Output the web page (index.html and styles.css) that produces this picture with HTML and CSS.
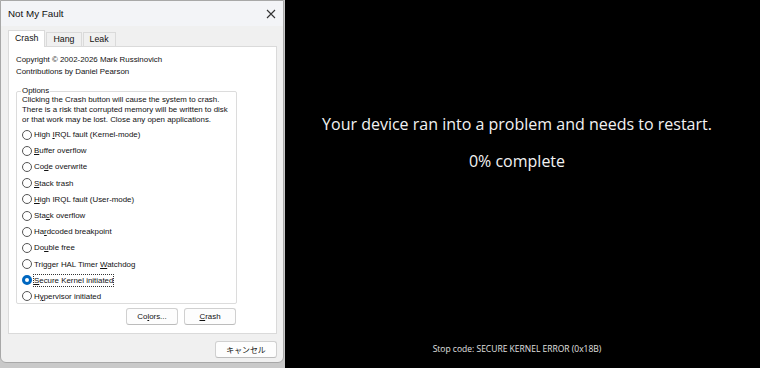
FILE: index.html
```html
<!doctype html>
<html lang="en">
  <head>
    <meta charset="UTF-8" />
    <meta name="viewport" content="width=device-width, initial-scale=1.0" />
    <title>Not My Fault</title>
    <link rel="stylesheet" href="styles.css">
  </head>
  <body>
    <div class="page">
      <div class="side">
        <div class="dialog">
          <div class="titlebar">
            <span>Not My Fault</span>
            <svg class="close" width="10" height="10" viewBox="0 0 10 10">
              <path d="M1 1 L9 9 M9 1 L1 9" stroke="#333" stroke-width="1.1" fill="none" />
            </svg>
          </div>

          <div class="content">
            <div class="tabs">
              <div class="tab active">Crash</div>
              <div class="tab">Hang</div>
              <div class="tab">Leak</div>
            </div>

            <div class="panel">
              <div class="copy">
                Copyright © 2002-2026 Mark Russinovich<br />
                Contributions by Daniel Pearson
              </div>

              <fieldset class="options">
                <legend>Options</legend>
                <p class="warn">
                  Clicking the Crash button will cause the system to crash.<br />
                  There is a risk that corrupted memory will be written to disk<br />
                  or that work may be lost. Close any open applications.
                </p>
                <ul class="radios">
                  <li><span class="radio"></span><span>High <u>I</u>RQL fault (Kernel-mode)</span></li>
                  <li><span class="radio"></span><span><u>B</u>uffer overflow</span></li>
                  <li><span class="radio"></span><span>Co<u>d</u>e overwrite</span></li>
                  <li><span class="radio"></span><span><u>S</u>tack trash</span></li>
                  <li><span class="radio"></span><span><u>H</u>igh IRQL fault (User-mode)</span></li>
                  <li><span class="radio"></span><span>Sta<u>c</u>k overflow</span></li>
                  <li><span class="radio"></span><span>Ha<u>r</u>dcoded breakpoint</span></li>
                  <li><span class="radio"></span><span>Do<u>u</u>ble free</span></li>
                  <li><span class="radio"></span><span>Trigger HAL Timer <u>W</u>atchdog</span></li>
                  <li class="checked"><span class="radio"></span><span class="focus"><u>S</u>ecure Kernel initiated</span></li>
                  <li><span class="radio"></span><span>H<u>y</u>pervisor initiated</span></li>
                </ul>
              </fieldset>

              <div class="actions">
                <button>Co<u>l</u>ors...</button>
                <button><u>C</u>rash</button>
              </div>
            </div>
          </div>

          <div class="footer">
            <button class="cancel">キャンセル</button>
          </div>
        </div>
      </div>

      <div class="screen">
        <div class="message">Your device ran into a problem and needs to restart.</div>
        <div class="progress">0% complete</div>
        <div class="stop">Stop code: SECURE KERNEL ERROR (0x18B)</div>
      </div>
    </div>
  </body>
</html>
```

FILE: styles.css
```css
* {
  box-sizing: border-box;
}
body {
  margin: 0;
  background: #000;
  font-family: "Open Sans", "Noto Sans", "Noto Sans CJK JP", sans-serif;
}
.page {
  display: flex;
  width: 760px;
  height: 368px;
  overflow: hidden;
}
.side {
  width: 285px;
  flex: none;
  background: #c9c9c9;
}
.dialog {
  width: 284px;
  height: 363px;
  background: #f0f0f0;
  border: 1px solid #a8a8a8;
  border-radius: 0 0 6px 6px;
  display: flex;
  flex-direction: column;
  color: #111;
  font-family: "Liberation Sans", "Noto Sans CJK JP", sans-serif;
  font-size: 7.9px;
}
.titlebar {
  height: 25px;
  display: flex;
  align-items: center;
  justify-content: space-between;
  padding: 0 7px 0 7px;
  background: #f3f4f7;
  font-size: 9.8px;
}
.content {
  padding: 4px 6px 0 7px;
}
.tabs {
  display: flex;
  height: 16px;
  align-items: flex-end;
}
.tab {
  height: 14px;
  padding: 0 6px;
  border: 1px solid #dadada;
  border-bottom: none;
  margin-right: 1px;
  background: #f0f0f0;
  line-height: 13px;
  font-size: 8.8px;
}
.tab.active {
  height: 17px;
  background: #fff;
  margin-bottom: -1px;
  position: relative;
  line-height: 14px;
}
.panel {
  height: 288px;
  background: #fff;
  border: 1px solid #dadada;
  padding: 7px 7px 0 7px;
}
.copy {
  line-height: 12px;
}
.options {
  margin: 8px 0 0 0;
  padding: 0 5px 0 5px;
  width: 221px;
  height: 218px;
  border: 1px solid #dcdcdc;
  border-radius: 2px;
}
.options legend {
  padding: 0 1px;
  margin-left: -1px;
  line-height: 10px;
}
.warn {
  margin: -1px 0 0 0;
  line-height: 10px;
  white-space: nowrap;
}
.radios {
  list-style: none;
  margin: 1.5px 0 0 0;
  padding: 0;
}
.radios li {
  height: 16.2px;
  display: flex;
  align-items: center;
  gap: 2px;
  white-space: nowrap;
}
.radio {
  width: 10px;
  height: 10px;
  border: 1px solid #555;
  border-radius: 50%;
  flex: none;
  background: #fff;
}
.checked .radio {
  border: 3px solid #0067c0;
  background: #fff;
}
.focus {
  outline: 1px dotted #333;
  outline-offset: 0;
  line-height: 11px;
}
.actions {
  display: flex;
  justify-content: flex-end;
  gap: 6px;
  width: 220px;
  margin-top: 4px;
}
button {
  font-family: inherit;
  font-size: 7.9px;
  color: #111;
  background: #fdfdfd;
  border: 1px solid #d0d0d0;
  border-bottom-color: #bcbcbc;
  border-radius: 3px;
  width: 52px;
  height: 17px;
  padding: 0;
}
.footer {
  display: flex;
  justify-content: flex-end;
  padding: 7px 6px 0 0;
}
.cancel {
  width: 62px;
}
.screen {
  flex: 1;
  background: #000;
  color: #f2f2f2;
  display: flex;
  flex-direction: column;
  align-items: center;
  padding: 113px 11px 0 0;
}
.message {
  font-size: 16px;
  line-height: 22px;
}
.progress {
  font-size: 16px;
  line-height: 22px;
  margin-top: 15px;
}
.stop {
  font-size: 8.5px;
  margin-top: 171px;
  color: #e0e0e0;
}
```
